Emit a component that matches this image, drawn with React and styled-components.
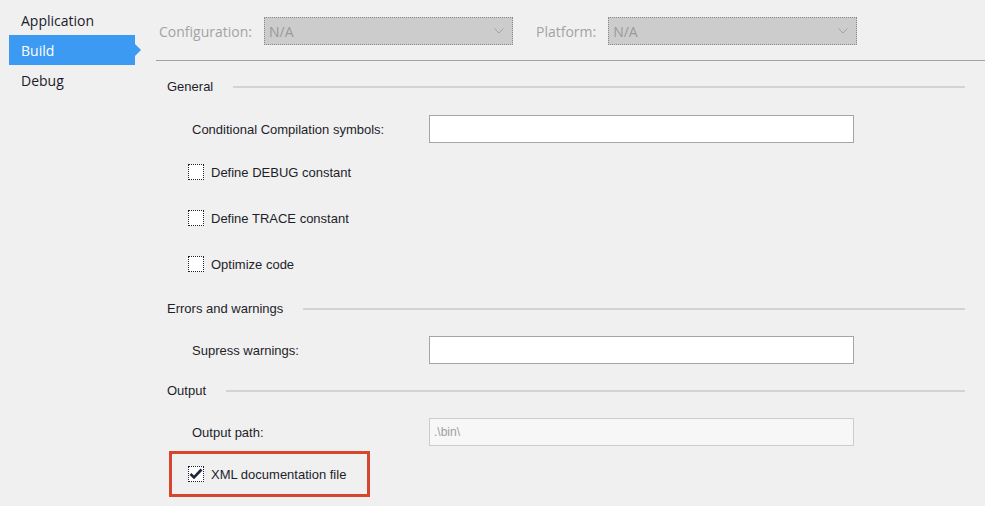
import React from 'react'
import styled, { createGlobalStyle } from 'styled-components'

const GlobalStyle = createGlobalStyle`
  html, body {
    margin: 0;
    padding: 0;
    background: #f0f0f0;
  }
`

const Page = styled.div`
  display: flex;
  width: 985px;
  height: 506px;
  overflow: hidden;
  background: #f0f0f0;
`

const Sidebar = styled.nav`
  width: 150px;
  flex-shrink: 0;
  padding-top: 5px;
  box-sizing: border-box;
  display: flex;
  flex-direction: column;
`

const NavItem = styled.div`
  position: relative;
  height: 30px;
  width: 126px;
  margin-left: 9px;
  padding-left: 12px;
  box-sizing: border-box;
  display: flex;
  align-items: center;
  font-family: 'Open Sans', 'Noto Sans', sans-serif;
  font-size: 14px;
  color: ${(p) => (p.active ? '#ffffff' : '#1b1b2b')};
  background: ${(p) => (p.active ? '#3c9af2' : 'transparent')};

  &::after {
    content: '';
    display: ${(p) => (p.active ? 'block' : 'none')};
    position: absolute;
    right: -6px;
    top: 9px;
    border-left: 6px solid #3c9af2;
    border-top: 6px solid transparent;
    border-bottom: 6px solid transparent;
  }
`

const Main = styled.main`
  flex: 1;
  display: flex;
  flex-direction: column;
`

const TopBar = styled.div`
  height: 61px;
  box-sizing: border-box;
  padding: 17px 0 0 3px;
  margin-left: 6px;
  border-bottom: 1px solid #a0a0a0;
  display: flex;
  align-items: flex-start;
`

const TopLabel = styled.span`
  height: 28px;
  display: flex;
  align-items: center;
  font-family: 'Open Sans', 'Noto Sans', sans-serif;
  font-size: 14px;
  color: #a3a3a3;
  margin-right: 12px;
  margin-left: ${(p) => p.gap || 0}px;
`

const Combo = styled.div`
  width: 249px;
  height: 28px;
  box-sizing: border-box;
  border: 1px dotted #8a8a8a;
  background: #cccccc;
  display: flex;
  align-items: center;
  justify-content: space-between;
  padding: 0 8px 0 4px;
  font-family: 'Open Sans', 'Noto Sans', sans-serif;
  font-size: 14px;
  color: #9a9a9a;
`

const Body = styled.div`
  padding: 0 20px 0 17px;
  display: flex;
  flex-direction: column;
`

const SectionHeader = styled.div`
  height: 20px;
  margin-top: ${(p) => p.top}px;
  display: flex;
  align-items: center;
  font-family: 'Liberation Sans', Arial, sans-serif;
  font-size: 13px;
  color: #1e1e2a;

  &::after {
    content: '';
    flex: 1;
    height: 2px;
    margin-left: 20px;
    margin-top: 2px;
    background: #d2d4d2;
  }
`

const FieldRow = styled.div`
  display: flex;
  align-items: center;
  height: 28px;
  margin-top: ${(p) => p.top}px;
  padding-left: 25px;
`

const FieldLabel = styled.span`
  width: 237px;
  font-family: 'Liberation Sans', Arial, sans-serif;
  font-size: 13px;
  color: #1e1e2a;
`

const TextInput = styled.div`
  width: 425px;
  height: 28px;
  box-sizing: border-box;
  border: 1px solid ${(p) => (p.disabled ? '#cccccc' : '#a5a5a5')};
  background: ${(p) => (p.disabled ? '#f7f7f7' : '#ffffff')};
  display: flex;
  align-items: center;
  padding-left: 4px;
  font-family: 'Liberation Sans', Arial, sans-serif;
  font-size: 12px;
  color: #a0a0a0;
`

const CheckRow = styled.label`
  display: flex;
  align-items: center;
  height: 20px;
  margin-top: ${(p) => p.top}px;
  padding-left: 21px;
  font-family: 'Liberation Sans', Arial, sans-serif;
  font-size: 13px;
  color: #1e1e2a;
`

const Box = styled.span`
  width: 16px;
  height: 16px;
  box-sizing: border-box;
  border: 1px dotted #1e1e2a;
  background: #ffffff;
  margin-right: 7px;
  display: flex;
  align-items: center;
  justify-content: center;
`

const Highlight = styled.div`
  width: 201px;
  height: 46px;
  box-sizing: border-box;
  margin: 5px 0 0 2px;
  border: 3px solid #d5462c;
  display: flex;
  align-items: center;

  ${CheckRow} {
    margin-top: 0;
    padding-left: 16px;
  }
`

const Chevron = () => (
  <svg width="10" height="6" viewBox="0 0 10 6">
    <path d="M0.5 0.5 L5 5 L9.5 0.5" fill="none" stroke="#a0a0a0" strokeWidth="1" />
  </svg>
)

const Check = () => (
  <svg width="14" height="12" viewBox="0 0 14 12">
    <path d="M1.5 6 L5 9.5 L12.5 1.5" fill="none" stroke="#1e2640" strokeWidth="2.6" />
  </svg>
)

const Checkbox = ({ checked, label, top }) => (
  <CheckRow top={top}>
    <Box>{checked && <Check />}</Box>
    {label}
  </CheckRow>
)

export default function App() {
  return (
    <Page>
      <GlobalStyle />
      <Sidebar>
        <NavItem>Application</NavItem>
        <NavItem active>Build</NavItem>
        <NavItem>Debug</NavItem>
      </Sidebar>
      <Main>
        <TopBar>
          <TopLabel>Configuration:</TopLabel>
          <Combo>
            N/A
            <Chevron />
          </Combo>
          <TopLabel gap={23}>Platform:</TopLabel>
          <Combo>
            N/A
            <Chevron />
          </Combo>
        </TopBar>
        <Body>
          <SectionHeader top={15}>General</SectionHeader>
          <FieldRow top={19}>
            <FieldLabel>Conditional Compilation symbols:</FieldLabel>
            <TextInput />
          </FieldRow>
          <Checkbox top={19} label="Define DEBUG constant" />
          <Checkbox top={26} label="Define TRACE constant" />
          <Checkbox top={26} label="Optimize code" />
          <SectionHeader top={24}>Errors and warnings</SectionHeader>
          <FieldRow top={18}>
            <FieldLabel>Supress warnings:</FieldLabel>
            <TextInput />
          </FieldRow>
          <SectionHeader top={16}>Output</SectionHeader>
          <FieldRow top={18}>
            <FieldLabel>Output path:</FieldLabel>
            <TextInput disabled>.\bin\</TextInput>
          </FieldRow>
          <Highlight>
            <Checkbox checked label="XML documentation file" />
          </Highlight>
        </Body>
      </Main>
    </Page>
  )
}
